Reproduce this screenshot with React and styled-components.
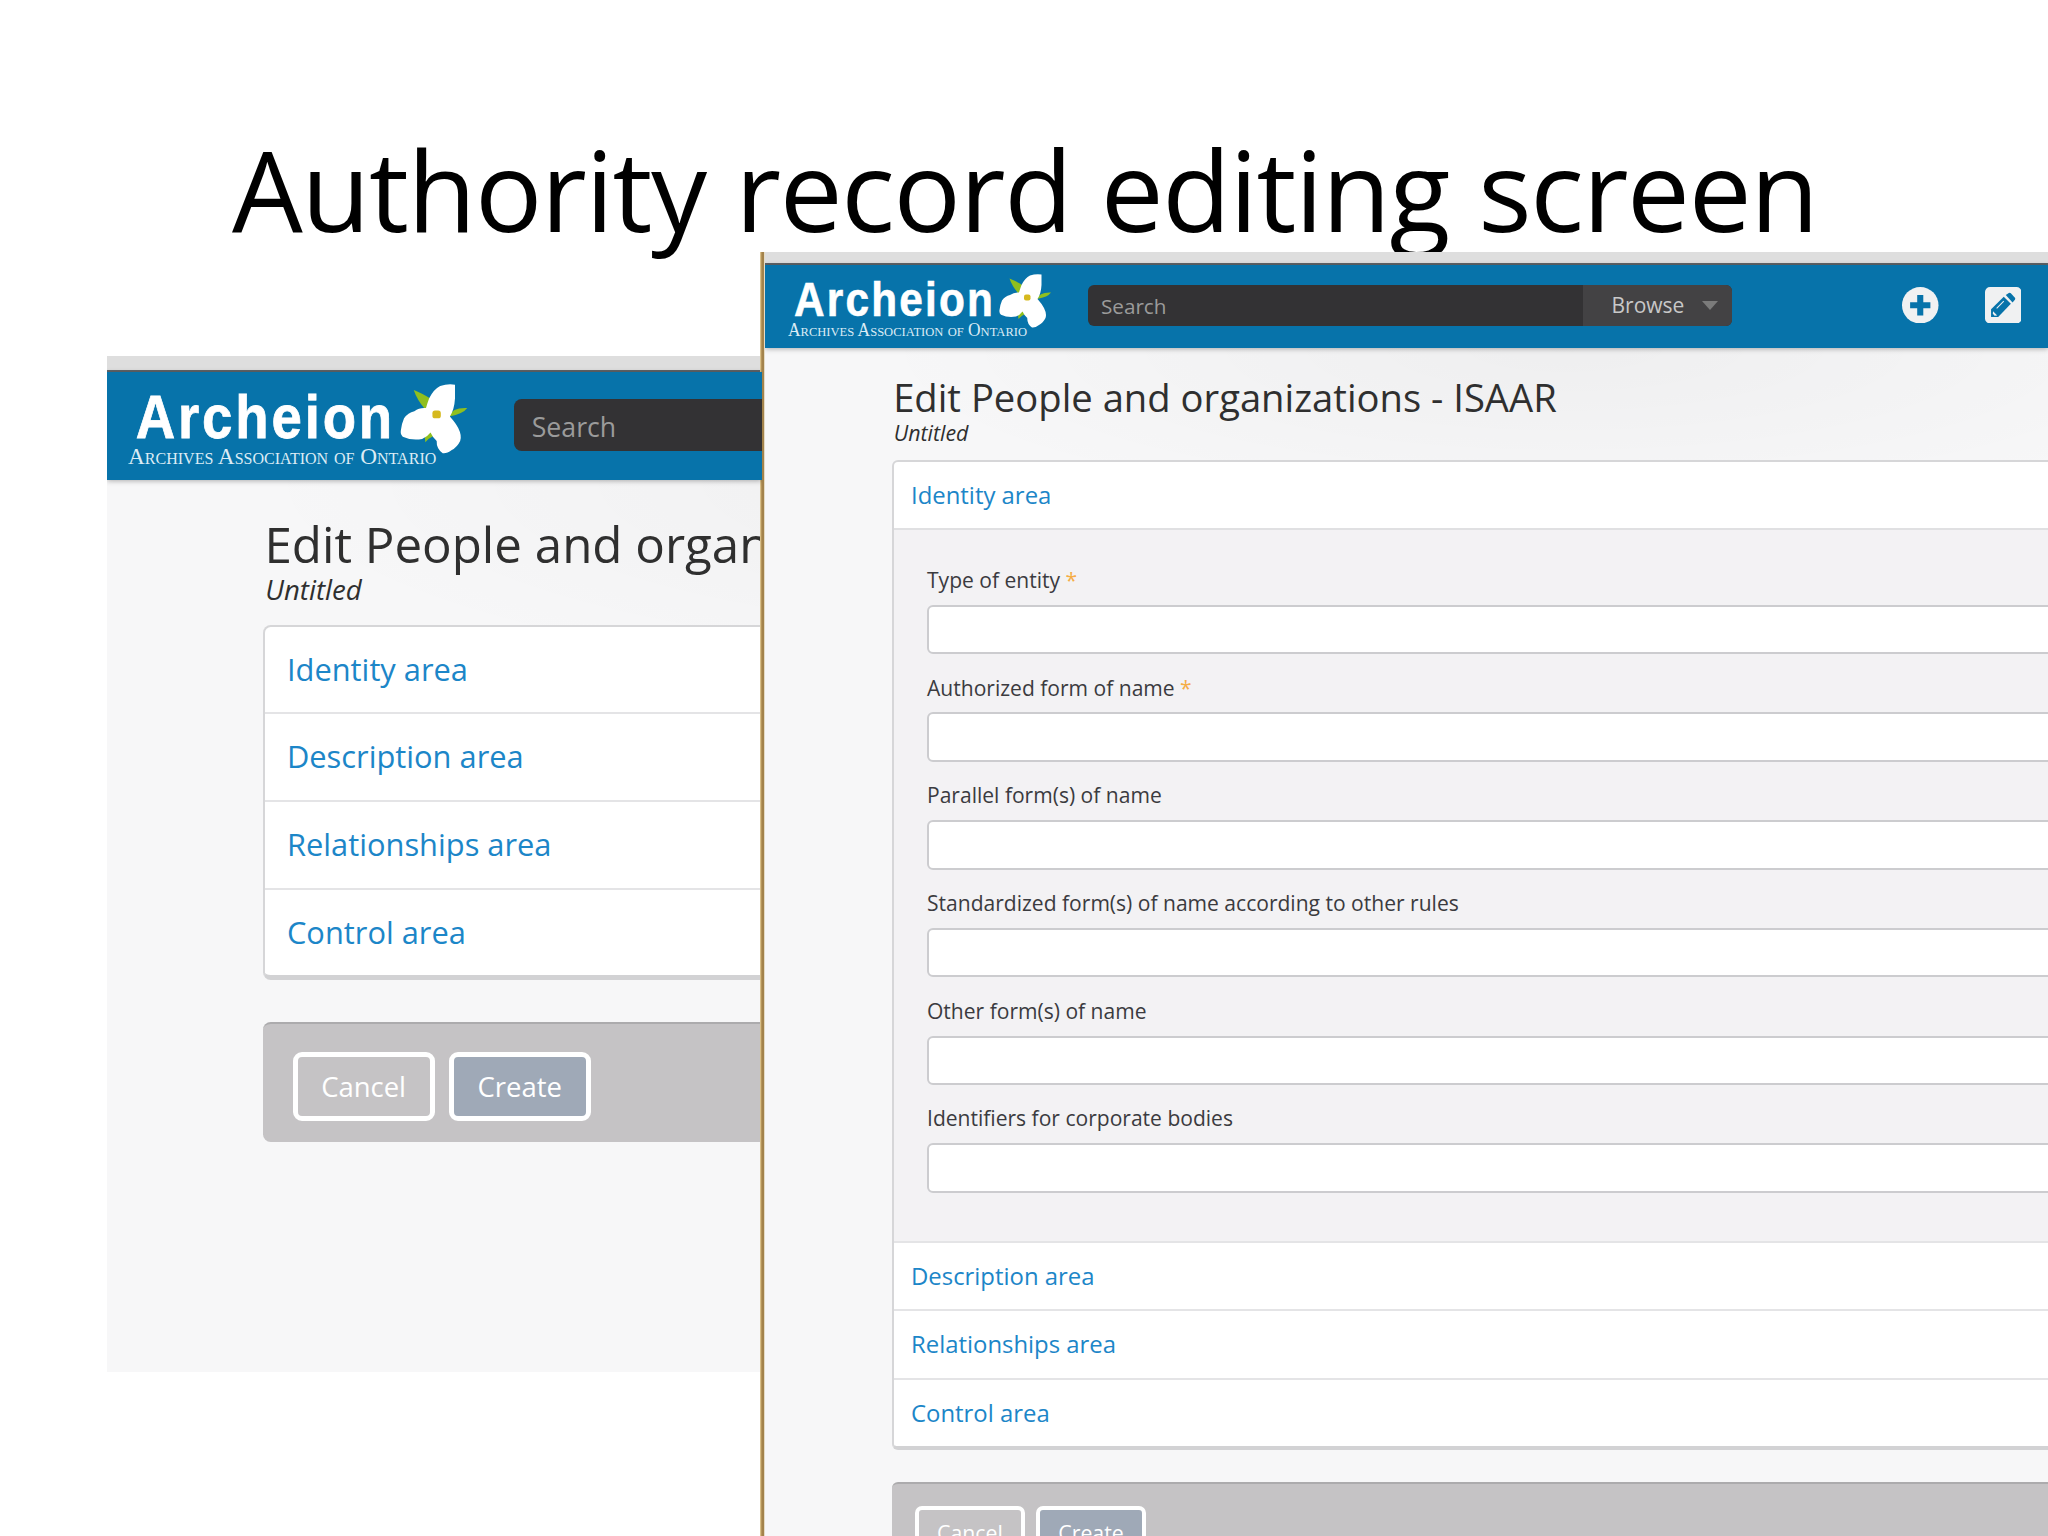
import React from 'react';
import styled, { createGlobalStyle } from 'styled-components';

const GlobalStyle = createGlobalStyle`
  body {
    margin: 0;
    background: #fff;
  }
  * {
    box-sizing: border-box;
  }
`;

const Slide = styled.main`
  position: relative;
  width: 2048px;
  height: 1536px;
  overflow: hidden;
  background: #fff;
  font-family: 'Open Sans', sans-serif;
`;

const Title = styled.h1`
  margin: 0;
  padding: 109px 0 0 232px;
  font-size: 112px;
  font-weight: 400;
  line-height: 160px;
  letter-spacing: -1.3px;
  word-spacing: 1.5px;
  white-space: nowrap;
  color: #000;
`;

// every length inside a window is in em, so that one font-size scales it
const Window = styled.section`
  position: absolute;
  left: ${(p) => p.$left}px;
  top: ${(p) => p.$top}px;
  width: ${(p) => p.$width}px;
  height: ${(p) => p.$height}px;
  font-size: ${(p) => p.$unit}px;
  overflow: hidden;
  display: flex;
  flex-direction: column;
  background: #f7f7f8;
`;

const FrontWindow = styled(Window)`
  border-left: 5px solid;
  border-image: linear-gradient(to right, #d9c08a 0 1px, #b5945a 1px 2px, #a3834c 2px 4px, #e6dcc6 4px) 0 0 0 5;
`;

const BrowserEdge = styled.div`
  flex: none;
  height: 1.25em;
  background: #dedede;
  border-bottom: 0.22em solid #5f6468;
`;

const Header = styled.header`
  flex: none;
  display: flex;
  align-items: flex-start;
  height: 8.33em;
  padding-left: ${(p) => p.$indent}px;
  background: #0773aa;
  box-shadow: 0 1px 5px rgba(0, 0, 0, 0.3);
  z-index: 1;
`;

const Logo = styled.svg`
  flex: none;
  display: block;
  width: 26.5em;
  height: 7em;
  margin-top: 0.57em;
`;

const SearchBar = styled.div`
  flex: none;
  display: flex;
  width: 64.4em;
  height: 4.1em;
  margin: 2.05em 0 0 3.45em;
  border-radius: 0.6em;
  overflow: hidden;
  background: #333234;
`;

const SearchText = styled.span`
  flex: 1;
  padding-left: 0.65em;
  font-size: 2.07em;
  line-height: 2.12em;
  color: #9b9b9b;
`;

const Browse = styled.div`
  display: flex;
  align-items: center;
  width: 14.85em;
  padding-left: 2.85em;
  background: #434244;
`;

const BrowseText = styled.span`
  font-size: 2.1em;
  line-height: 1.9em;
  color: #c8c8c8;
`;

const Caret = styled.span`
  margin-left: 1.75em;
  border: 0.85em solid transparent;
  border-top: 0.95em solid #7b7b7b;
  border-bottom: 0;
`;

const Icons = styled.div`
  display: flex;
  gap: 4.6em;
  margin: 2.23em 0 0 17.05em;

  svg {
    display: block;
    width: 3.65em;
    height: 3.65em;
  }
`;

const Content = styled.div`
  flex: 1;
  padding: 2.47em 0 0 ${(p) => p.$indent}px;
  background: radial-gradient(ellipse 70em 17em at 80em 0, rgba(0, 0, 0, 0.035), transparent);
`;

const Heading = styled.h2`
  margin: 0;
  padding-left: 0.03em;
  font-size: 3.82em;
  font-weight: 400;
  line-height: 1.35em;
  white-space: nowrap;
  color: #2f2f2f;
`;

const Subtitle = styled.p`
  margin: -0.15em 0 0;
  padding-left: 0.08em;
  font-size: 2.14em;
  font-style: italic;
  line-height: 1.15em;
  color: #2f2f2f;
`;

const Panel = styled.div`
  width: 130em;
  margin-top: 1.47em;
  border: 0.2em solid #d6d6d8;
  border-bottom: 0.4em solid #d2d2d4;
  border-radius: 0.6em;
  overflow: hidden;
  background: #fff;
`;

const Row = styled.div`
  height: ${(p) => (p.$first ? 6.62 : 6.81)}em;
  padding-left: 1.7em;
  border-top: ${(p) => (p.$first ? '0' : '0.2em solid #e4e4e6')};
  color: #1c86c8;
`;

const RowText = styled.span`
  font-size: 2.39em;
  line-height: 2.74em;
`;

const Fields = styled.div`
  height: 71.3em;
  padding: 3.15em 0 0 3.3em;
  border-top: 0.2em solid #e0e0e2;
  background: #f3f2f4;
`;

const Field = styled.div`
  height: 10.77em;
`;

const Label = styled.div`
  height: 2.04em;
  font-size: 2.105em;
  line-height: 1.75em;
  white-space: nowrap;
  color: #3b3b3f;

  span {
    color: #f5ad45;
  }
`;

const Input = styled.div`
  height: 4.95em;
  border: 0.2em solid #cccccf;
  border-radius: 0.6em;
  background: #fff;
`;

const Actions = styled.div`
  display: flex;
  gap: 1.1em;
  width: 130em;
  height: 9.25em;
  margin-top: 3.25em;
  padding: 2.15em 0 0 2.3em;
  border-top: 0.2em solid #acabad;
  border-radius: 0.6em;
  background: #c5c3c5;
`;

const Button = styled.div`
  width: 11em;
  height: 5.35em;
  border: 0.4em solid #fff;
  border-radius: 0.7em;
  text-align: center;
  color: #fff;
  background: ${(p) => (p.$primary ? '#9fa9b7' : 'transparent')};

  span {
    font-size: 2.13em;
    line-height: 2.18em;
  }
`;

const fields = [
  { label: 'Type of entity', required: true },
  { label: 'Authorized form of name', required: true },
  { label: 'Parallel form(s) of name' },
  { label: 'Standardized form(s) of name according to other rules' },
  { label: 'Other form(s) of name' },
  { label: 'Identifiers for corporate bodies' },
];

const areas = ['Description area', 'Relationships area', 'Control area'];

const ArcheionLogo = () => (
  <Logo viewBox="0 0 265 70">
    <text
      x="6"
      y="45.5"
      fontFamily="Liberation Sans"
      fontWeight="700"
      fontSize="48"
      letterSpacing="2.5"
      stroke="#fff"
      strokeWidth="0.6"
      textLength="201"
      lengthAdjust="spacingAndGlyphs"
      fill="#fff"
    >
      Archeion
    </text>
    <text
      x="0"
      y="66"
      fontFamily="Liberation Serif"
      fontSize="18"
      fontVariant="small-caps"
      textLength="239"
      lengthAdjust="spacingAndGlyphs"
      fill="#dcecf5"
    >
      Archives Association of Ontario
    </text>
    <g fill="#8fbf1f">
      <path d="M221.5 8.5Q230 12 234 15L233 24L230 23Q224 16 221.5 8.5Z" />
      <path d="M249 29Q251 22 263 22.5Q260 27 249 29Z" />
      <path d="M230.5 49Q229 42 234 40L237 44Q233 46 230.5 49Z" />
    </g>
    <path
      d="M233.5 15Q237 8 242 5.5Q248 3.5 253.5 4.5V15Q253 24 249.5 29Q254 34 256 38Q259 44 257.5 48Q255 53 251 55Q247 58 244 57.5Q239 54 239.3 48Q236 45 234.5 41.5Q232 45 228 46.5Q220 48 213 44.7Q211 43 211.5 40Q212 35 214 30.5Q217 26 222 25Q226 22 231 22.5Q232 19 233.5 15Z"
      fill="#fff"
    />
    <rect x="236" y="24.5" width="6.5" height="6" rx="2" fill="#d6b91e" />
  </Logo>
);

const AppHeader = ({ indent }) => (
  <Header $indent={indent}>
    <ArcheionLogo />
    <SearchBar>
      <SearchText>Search</SearchText>
      <Browse>
        <BrowseText>Browse</BrowseText>
        <Caret />
      </Browse>
    </SearchBar>
    <Icons>
      <svg viewBox="0 0 36 36">
        <circle cx="18" cy="18" r="18" fill="#f0f1f2" />
        <path d="M15 8h6v7h7v6h-7v7h-6v-7H8v-6h7z" fill="#0773aa" />
      </svg>
      <svg viewBox="0 0 36 36">
        <rect width="36" height="36" rx="5" fill="#f0f1f2" />
        <path d="M6 29.5V22L18.5 9.5l7 7L13 29.5z" fill="#0773aa" />
        <path d="M20.5 8l3-2.2q1-.6 2 .4l4 4.4q.8 1 0 2l-2.3 2.6z" fill="#0773aa" />
        <path d="M8 24l4 4-2.5.3-1.8-1.8z" fill="#f0f1f2" />
        <path d="M11.5 21l7-7" stroke="#f0f1f2" strokeWidth="1" />
      </svg>
    </Icons>
  </Header>
);

const EditPage = ({ headerIndent, indent, open }) => (
  <>
    <BrowserEdge />
    <AppHeader indent={headerIndent} />
    <Content $indent={indent}>
      <Heading>Edit People and organizations - ISAAR</Heading>
      <Subtitle>Untitled</Subtitle>
      <Panel>
        <Row $first>
          <RowText>Identity area</RowText>
        </Row>
        {open && (
          <Fields>
            {fields.map(({ label, required }) => (
              <Field key={label}>
                <Label>
                  {label} {required && <span>*</span>}
                </Label>
                <Input />
              </Field>
            ))}
          </Fields>
        )}
        {areas.map((area) => (
          <Row key={area}>
            <RowText>{area}</RowText>
          </Row>
        ))}
      </Panel>
      <Actions>
        <Button>
          <span>Cancel</span>
        </Button>
        <Button $primary>
          <span>Create</span>
        </Button>
      </Actions>
    </Content>
  </>
);

const App = () => (
  <Slide>
    <GlobalStyle />
    <Title>Authority record editing screen</Title>
    <Window $left={107} $top={356} $width={655} $height={1016} $unit={12.9}>
      <EditPage headerIndent={21} indent={156} />
    </Window>
    <FrontWindow $left={760} $top={252} $width={1288} $height={1284} $unit={10}>
      <EditPage headerIndent={23} indent={127} open />
    </FrontWindow>
  </Slide>
);

export default App;
